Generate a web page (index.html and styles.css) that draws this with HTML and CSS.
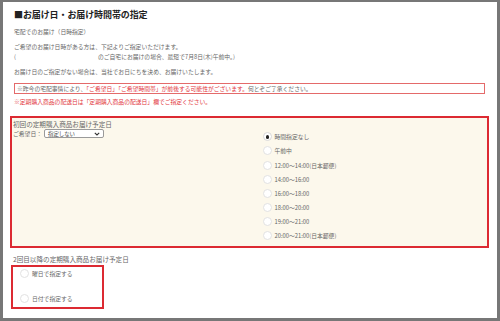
FILE: index.html
```html
<!DOCTYPE html>
<html lang="ja">
<head>
<meta charset="utf-8">
<title>お届け日・お届け時間帯の指定</title>
<link rel="stylesheet" href="styles.css">
</head>
<body>
<div class="page">
  <div class="intro">
    <h1 class="title">■お届け日・お届け時間帯の指定</h1>
    <p class="txt p1">宅配でのお届け（日時指定）</p>
    <p class="txt p2">ご希望のお届け日時がある方は、下記よりご指定いただけます。<br>(<span class="addr-gap"></span>のご自宅にお届けの場合、最短で7月8日(木)午前中。)</p>
    <p class="txt p3">お届け日のご指定がない場合は、当社でお日にちを決め、お届けいたします。</p>
    <p class="notice">※昨今の宅配事情により、<span class="red">「ご希望日」「ご希望時間帯」が前後する可能性がございます。</span>何とぞご了承ください。</p>
    <p class="red-line">※定期購入商品の配送日は「定期購入商品の配送日」欄でご指定ください。</p>
  </div>

  <div class="first-box">
    <div class="left-col">
      <div class="sub-head">初回の定期購入商品お届け予定日</div>
      <div class="date-row">
        <span class="date-label">ご希望日：</span>
        <div class="select"><span>指定しない</span><svg width="6" height="4" viewBox="0 0 6 4"><path d="M0.8 0.8 L3 3 L5.2 0.8" fill="none" stroke="#333" stroke-width="1.1"/></svg></div>
      </div>
    </div>
    <ul class="time-list">
      <li class="opt"><span class="radio checked"></span>時間指定なし</li>
      <li class="opt"><span class="radio"></span>午前中</li>
      <li class="opt"><span class="radio"></span>12:00～14:00(日本郵便)</li>
      <li class="opt"><span class="radio"></span>14:00～16:00</li>
      <li class="opt"><span class="radio"></span>16:00～18:00</li>
      <li class="opt"><span class="radio"></span>18:00～20:00</li>
      <li class="opt"><span class="radio"></span>19:00～21:00</li>
      <li class="opt"><span class="radio"></span>20:00～21:00(日本郵便)</li>
    </ul>
  </div>

  <div class="sub-head second-head">2回目以降の定期購入商品お届け予定日</div>
  <ul class="second-box">
    <li class="opt2"><span class="radio"></span>曜日で指定する</li>
    <li class="opt2"><span class="radio"></span>日付で指定する</li>
  </ul>
</div>
</body>
</html>
```

FILE: styles.css
```css
html, body {
  margin: 0;
  padding: 0;
}
body {
  background: #777777;
  width: 500px;
  height: 321px;
  overflow: hidden;
  font-family: "Noto Sans CJK JP", "Noto Sans", sans-serif;
  color: #666666;
}
.page {
  margin: 2px 3px 0 3px;
  height: 316px;
  background: #ffffff;
  box-sizing: border-box;
  padding: 6px 8px 0 7px;
}
.intro {
  padding: 0 4px;
}
.title {
  margin: 0;
  font-size: 9px;
  line-height: 14px;
  font-weight: bold;
  color: #222222;
  letter-spacing: -0.1px;
}
.txt {
  margin: 0;
  font-size: 5.8px;
  line-height: 10px;
}
.p1 { margin-top: 5px; }
.p2 { margin-top: 4.7px; }
.p3 { margin-top: 5px; }
.addr-gap {
  display: inline-block;
  width: 82px;
}
.notice {
  margin: 6.3px 0 0 0;
  border: 1px solid #e46a6a;
  font-size: 5.8px;
  line-height: 9px;
  padding: 0 2px;
  color: #666666;
}
.red {
  color: #e2363c;
}
.red-line {
  margin: 2.7px 0 0 0;
  font-size: 5.8px;
  line-height: 10px;
  color: #e2363c;
}
.first-box {
  margin-top: 9.3px;
  border: 2px solid #dc2a32;
  background: #fcf8ec;
  height: 132px;
  box-sizing: border-box;
  display: grid;
  grid-template-columns: 1fr 1fr;
}
.left-col {
  padding: 1px 0 0 1px;
}
.sub-head {
  font-size: 6.6px;
  line-height: 10px;
  color: #666666;
}
.date-row {
  display: flex;
  align-items: center;
  height: 10px;
  font-size: 5.8px;
}
.date-label {
  width: 31px;
}
.select {
  display: flex;
  align-items: center;
  justify-content: space-between;
  width: 60px;
  height: 9px;
  box-sizing: border-box;
  border: 1px solid #9a9a9a;
  border-radius: 2px;
  background: #ffffff;
  padding: 0 3px 0 3px;
  font-size: 5.4px;
  color: #444444;
}
.time-list {
  list-style: none;
  margin: 0;
  padding: 11.6px 0 0 13px;
}
.opt {
  display: flex;
  align-items: center;
  height: 14.2px;
  font-size: 5.8px;
}
.radio {
  display: inline-block;
  width: 9px;
  height: 9px;
  box-sizing: border-box;
  border: 1px solid #e2e2e2;
  border-radius: 50%;
  background: #ffffff;
  margin-right: 3px;
  position: relative;
  flex: none;
}
.radio.checked {
  border-color: #d8d8d8;
}
.radio.checked::after {
  content: "";
  position: absolute;
  left: 2px;
  top: 2px;
  width: 3.5px;
  height: 3.5px;
  border-radius: 50%;
  background: #222222;
}
.second-head {
  margin-top: 6px;
  padding-left: 3px;
}
.second-box {
  list-style: none;
  margin: 1px 0 0 1px;
  padding: 0 0 0 7px;
  width: 93px;
  height: 44px;
  box-sizing: border-box;
  border: 2px solid #dc2a32;
  background: #ffffff;
  display: flex;
  flex-direction: column;
  gap: 11px;
}
.opt2 {
  display: flex;
  align-items: center;
  height: 14px;
  font-size: 5.8px;
}
```
